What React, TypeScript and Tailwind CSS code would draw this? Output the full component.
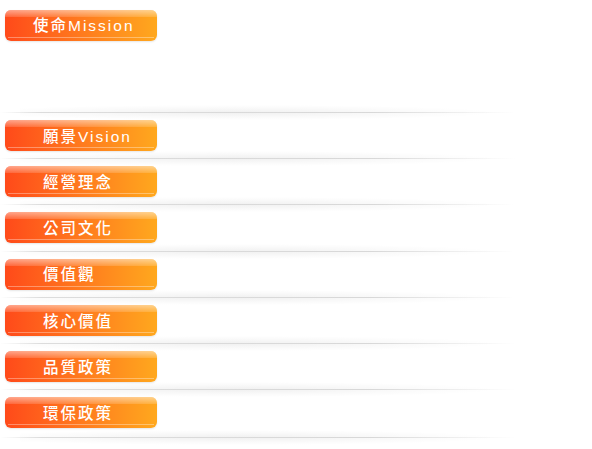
import React from "react";

const items = ["願景Vision", "經營理念", "公司文化", "價值觀", "核心價值", "品質政策", "環保政策"];

function Divider() {
    return (
        <div className="relative h-px w-[515px] shrink-0">
            {/* soft shadow around the line */}
            <div className="absolute inset-x-[20px] -top-[7px] h-[15px] bg-[radial-gradient(ellipse_at_45%_50%,rgba(0,0,0,0.06),rgba(0,0,0,0.02)_45%,transparent_72%)]" />
            <div className="absolute inset-0 bg-[linear-gradient(to_right,transparent,#dcdcdc_8%,#d8d8d8_72%,transparent)]" />
        </div>
    );
}

function TabButton({ label, pad = "pl-[38px]" }: { label: string; pad?: string }) {
    return (
        <div className="relative ml-[5px] h-[31px] w-[152px] shrink-0 overflow-hidden rounded-[6px] bg-[linear-gradient(to_right,#ff4a1a,#ff7a1e_50%,#ffa81e)] shadow-[0_1px_2px_rgba(0,0,0,0.1)]">
            {/* gloss */}
            <div className="absolute inset-x-0 top-0 h-[7px] bg-[linear-gradient(to_bottom,rgba(255,255,255,0.5),rgba(255,255,255,0.15))]" />
            <div className="absolute inset-x-[3px] bottom-[3px] h-px bg-white/35" />
            <div
                className={`relative flex h-full items-center pt-[2px] ${pad} text-[15.5px] font-medium tracking-[2px] text-white`}
                style={{ fontFamily: '"Liberation Sans", "Noto Sans CJK TC", sans-serif' }}
            >
                {label}
            </div>
        </div>
    );
}

export default function App() {
    return (
        <div className="h-[449px] w-[592px] overflow-hidden bg-white">
            <div className="flex flex-col pt-[9.5px]">
                <TabButton label="使命Mission" pad="pl-[28px]" />
                <div className="h-[71.5px] shrink-0" />
                {items.map((label) => (
                    <div key={label} className="flex flex-col">
                        <Divider />
                        <div className="h-[7px] shrink-0" />
                        <TabButton label={label} />
                        <div className="h-[7.2px] shrink-0" />
                    </div>
                ))}
                <div className="h-[1.6px] shrink-0" />
                <Divider />
            </div>
        </div>
    );
}
